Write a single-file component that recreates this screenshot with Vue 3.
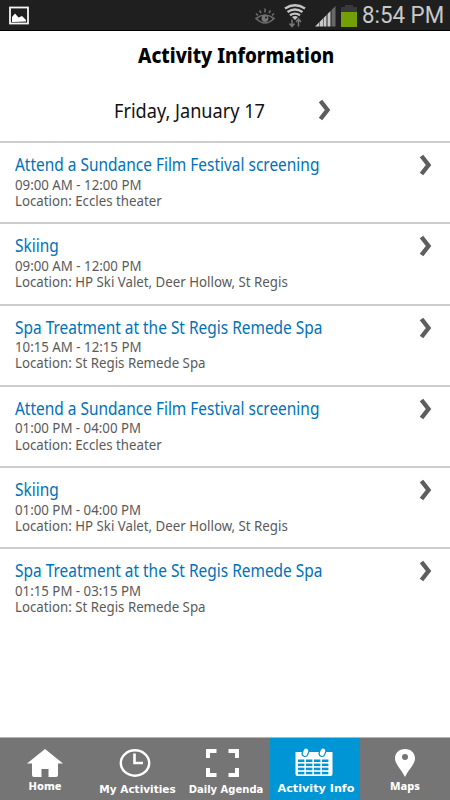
<template>
  <div class="screen">
    <header class="status-bar">
      <svg class="picture-icon" width="22" height="20" viewBox="0 0 22 20">
        <rect x="2" y="1.5" width="18" height="16" fill="none" stroke="#f4f4f4" stroke-width="1.8" />
        <path d="M4 16V11l3-3.500 3.500 4 3.500-1.500 4 4v1.500z" fill="#fff" />
      </svg>
      <div class="status-icons">
        <svg class="eye-icon" width="20" height="17" viewBox="0 0 20 17">
          <g fill="none" stroke="#6c6c6c" stroke-width="1.6">
            <path d="M1 10.500q9-7 18 0q-9 9-18 0z" />
            <path d="M10 0.500v4M4.500 2.500l1.500 2.500M15.500 2.500l-1.500 2.500M1 5.500l2 2M19 5.500l-2 2" />
          </g>
          <circle cx="10" cy="10.500" r="3.400" fill="#777" />
          <circle cx="11" cy="9.500" r="1.100" fill="#1f1f1f" />
        </svg>
        <svg class="wifi-icon" width="22" height="24" viewBox="0 0 22 24">
          <g fill="none" stroke="#c4c4c4" stroke-width="2.400">
            <path d="M1 4.500q10-6.500 20 0" />
            <path d="M3.500 8q7.500-5 15 0" />
            <path d="M6 11.300q5-3.300 10 0" />
          </g>
          <path d="M8 13q3-2 6 0l-3 3z" fill="#c4c4c4" />
          <path d="M8 15.500v7M5.500 19.500L8 22.500l2.500-3M14.500 22.500v-7M12 18l2.500-3 2.500 3" fill="none" stroke="#777" stroke-width="1.500" />
        </svg>
        <svg class="signal-icon" width="21" height="21" viewBox="0 0 21 21">
          <path d="M0 20.500L4 16.500V20.500zM4.500 20.500V16L8 12.500V20.500zM8.500 20.500V12L11.500 9V20.500zM12.500 20.500V8L15.500 5V20.500z" fill="#c8c8c8" />
          <path d="M16.500 20.500V4L20.500 0V20.500z" fill="#686868" />
        </svg>
        <svg class="battery-icon" width="16" height="22" viewBox="0 0 16 22">
          <path d="M4 0h8v2h4v5H0V2h4z" fill="#393939" />
          <rect y="7" width="16" height="15" fill="#73a005" />
        </svg>
      </div>
      <span class="clock">8:54 PM</span>
    </header>

    <h1 class="page-title"><span>Activity Information</span></h1>

    <div class="day-picker">
      <span class="day">Friday, January 17</span>
      <svg class="chevron" width="13" height="22" viewBox="0 0 13 22">
        <path d="M2.500 2L9.500 11l-7 9" />
      </svg>
    </div>

    <ul class="activities">
      <li v-for="(item, index) in activities" :key="index" class="activity">
        <div class="details">
          <span class="name">{{ item.name }}</span>
          <span class="line">{{ item.time }}</span>
          <span class="line">Location: {{ item.location }}</span>
        </div>
        <svg class="chevron" width="13" height="22" viewBox="0 0 13 22">
          <path d="M2.500 2L9.500 11l-7 9" />
        </svg>
      </li>
    </ul>

    <nav class="tabs">
      <a class="tab home">
        <svg width="36" height="28" viewBox="0 0 36 28">
          <path d="M18 0L36 14.500H31V26q0 2-2 2H21.500V20h-7v8H7q-2 0-2-2V14.500H0z" fill="#fff" />
        </svg>
        <span class="label">Home</span>
      </a>
      <a class="tab mine">
        <svg width="32" height="28" viewBox="0 0 32 28">
          <ellipse cx="16" cy="14" rx="14.200" ry="12.700" fill="none" stroke="#fff" stroke-width="2.400" />
          <path d="M15.500 4.500V14H24" fill="none" stroke="#fff" stroke-width="2.600" />
        </svg>
        <span class="label">My Activities</span>
      </a>
      <a class="tab agenda">
        <svg width="33" height="28" viewBox="0 0 33 28">
          <path d="M2 9V2H10.500M22.500 2h8.500v7M31 19v7H22.500M10.500 26H2V19" fill="none" stroke="#fff" stroke-width="4" />
        </svg>
        <span class="label">Daily Agenda</span>
      </a>
      <a class="tab info active">
        <svg width="38" height="28" viewBox="0 0 38 28">
          <path d="M0.500 4h37v22q0 2-2 2H2.500q-2 0-2-2z" fill="#fff" />
          <g fill="#0096d6">
            <template v-for="row in 4" :key="row">
              <rect v-for="col in 4" :key="col" :x="col * 8 - 5" :y="row * 4.1 + 7.4" width="6.400" height="2.500" />
            </template>
          </g>
          <g stroke-linecap="round">
            <path d="M10 5.500l1-2.500M27 5.500l1-2.500" stroke="#0096d6" stroke-width="7" />
            <path d="M10 5.500l1-2.500M27 5.500l1-2.500" stroke="#fff" stroke-width="4.600" />
          </g>
        </svg>
        <span class="label">Activity Info</span>
      </a>
      <a class="tab maps">
        <svg width="20" height="28" viewBox="0 0 20 28">
          <path d="M10 0C4 0 0 4 0 9.500C0 15 6 20 10 28C14 20 20 15 20 9.500C20 4 16 0 10 0z" fill="#fff" />
          <circle cx="10" cy="8" r="3" fill="#757575" />
        </svg>
        <span class="label">Maps</span>
      </a>
    </nav>
  </div>
</template>

<script setup>
const activities = [
  { name: 'Attend a Sundance Film Festival screening', time: '09:00 AM - 12:00 PM', location: 'Eccles theater' },
  { name: 'Skiing', time: '09:00 AM - 12:00 PM', location: 'HP Ski Valet, Deer Hollow, St Regis' },
  { name: 'Spa Treatment at the St Regis Remede Spa', time: '10:15 AM - 12:15 PM', location: 'St Regis Remede Spa' },
  { name: 'Attend a Sundance Film Festival screening', time: '01:00 PM - 04:00 PM', location: 'Eccles theater' },
  { name: 'Skiing', time: '01:00 PM - 04:00 PM', location: 'HP Ski Valet, Deer Hollow, St Regis' },
  { name: 'Spa Treatment at the St Regis Remede Spa', time: '01:15 PM - 03:15 PM', location: 'St Regis Remede Spa' }
]
</script>

<style>
body {
  margin: 0;
}
</style>

<style scoped>
.screen {
  display: flex;
  flex-direction: column;
  width: 450px;
  height: 800px;
  overflow: hidden;
  background: #fff;
  font-family: "Noto Sans", sans-serif;
}

.status-bar {
  box-sizing: border-box;
  flex: none;
  display: flex;
  align-items: flex-start;
  height: 31px;
  padding: 5px 6px 0 8px;
  background: #1f1f1f;
  border-bottom: 1px solid #000;
}

.status-icons {
  display: flex;
  margin-left: auto;
}

.picture-icon {
  margin-top: 1px;
}

.eye-icon {
  margin: 3px 9px 0 0;
}

.wifi-icon {
  margin: -1px 9px 0 0;
}

.signal-icon {
  margin: 1px 5px 0 0;
}

.clock {
  width: 82px;
  margin: -3px 0 0 5px;
  color: #c8c8c8;
  font-family: Roboto, sans-serif;
  font-size: 23px;
  line-height: 28px;
  white-space: nowrap;
  transform: scaleX(0.97);
  transform-origin: left;
}

.page-title {
  flex: none;
  height: 48px;
  margin: 0;
  padding-left: 138px;
  color: #000;
  font-size: 20.5px;
  font-weight: 800;
  line-height: 48px;
  white-space: nowrap;
}

.page-title span {
  display: inline-block;
  transform: scaleX(0.922);
  transform-origin: left;
}

.day-picker {
  box-sizing: border-box;
  flex: none;
  display: flex;
  height: 62px;
  padding: 20px 0 0 114px;
}

.day {
  width: 204px;
  color: #111;
  font-size: 19.5px;
  line-height: 24px;
  white-space: nowrap;
  transform: scaleX(0.93);
  transform-origin: left;
}

.chevron {
  flex: none;
}

.chevron path {
  fill: none;
  stroke: #5e5e5e;
  stroke-width: 4.4;
}

.activities {
  flex: 1;
  margin: 0;
  padding: 0;
  list-style: none;
}

.activity {
  box-sizing: border-box;
  display: flex;
  height: 81.3px;
  padding: 11px 18px 0 15px;
  border-top: 2px solid #cdcdcd;
}

.details {
  display: flex;
  flex: 1;
  flex-direction: column;
  align-items: flex-start;
}

.name,
.line {
  white-space: nowrap;
  transform-origin: left;
}

.name {
  color: #0071b9;
  font-size: 18px;
  line-height: 21.5px;
  transform: scaleX(0.858);
}

.line {
  color: #5a5a5a;
  font-size: 14.5px;
  line-height: 16.3px;
  transform: scaleX(0.915);
}

.tabs {
  flex: none;
  display: flex;
  height: 62px;
  background: #757575;
  box-shadow: 0 -1px 0 #b5b5b5;
}

.tab {
  box-sizing: border-box;
  width: 90px;
  display: flex;
  flex-direction: column;
  align-items: center;
  padding-top: 11px;
  color: #fff;
}

.tab.active {
  background: #0096d6;
}

.tab svg {
  flex: none;
}

.label {
  margin-top: 4px;
  font-family: "DejaVu Sans", sans-serif;
  font-size: 10px;
  font-weight: 700;
  line-height: 14px;
  white-space: nowrap;
}

.home .label,
.maps .label {
  margin-top: 2px;
  font-family: "Noto Sans", sans-serif;
  font-size: 11px;
  font-weight: 800;
}

.mine .label {
  margin: 5px 0 0 5px;
  font-size: 10.5px;
}

.agenda svg {
  margin-left: -6px;
}

.agenda .label {
  margin: 6px 0 0 2px;
}

.info {
  padding-top: 10px;
}

.info svg {
  margin-left: -3px;
}

.info .label {
  margin: 6px 0 0 2px;
  font-size: 11.2px;
}
</style>
